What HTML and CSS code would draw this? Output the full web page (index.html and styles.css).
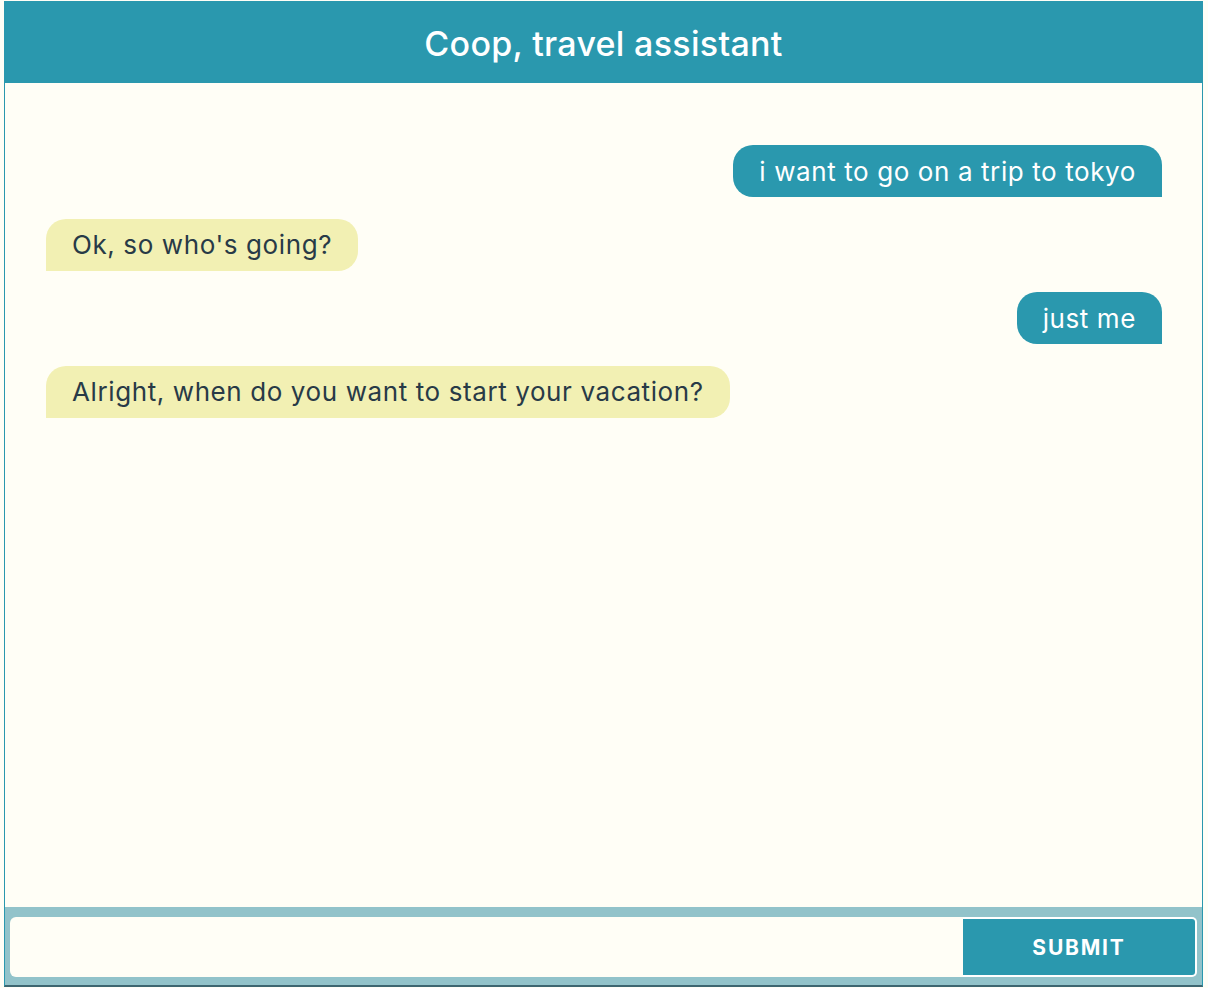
FILE: index.html
```html
<!DOCTYPE html>
<html>
<head>
<meta charset="utf-8">
<link rel="stylesheet" href="styles.css">
</head>
<body>
<div class="chat">
  <header class="chat-header">Coop, travel assistant</header>
  <main class="messages">
    <div class="msg user"><span>i want to go on a trip to tokyo</span></div>
    <div class="msg bot"><span>Ok, so who's going?</span></div>
    <div class="msg user"><span>just me</span></div>
    <div class="msg bot"><span>Alright, when do you want to start your vacation?</span></div>
  </main>
  <form class="composer" onsubmit="return false">
    <input class="composer-input" type="text">
    <button class="composer-btn" type="submit">SUBMIT</button>
  </form>
</div>
</body>
</html>
```
FILE: styles.css
```css
html, body {
  margin: 0;
  padding: 0;
  background: #fffef6;
}
body {
  font-family: Inter, "Noto Sans", sans-serif;
  padding: 1px 4px 0 4px;
}
.chat {
  width: 1199px;
  height: 986px;
  box-sizing: border-box;
  border: 1px solid #2a98ae;
  border-top: 0;
  border-bottom: 2px solid #3d6670;
  display: flex;
  flex-direction: column;
  background: #fffef6;
}
.chat-header {
  height: 82px;
  flex: none;
  background: #2a98ae;
  color: #fff;
  font-size: 34px;
  font-weight: 500;
  display: flex;
  align-items: center;
  justify-content: center;
  letter-spacing: 0.3px;
  padding-top: 2px;
  box-sizing: border-box;
}
.messages {
  flex: 1;
  padding: 62px 40px 0 41px;
  display: flex;
  flex-direction: column;
  gap: 21.5px;
}
.msg {
  display: flex;
}
.msg span {
  height: 52px;
  box-sizing: border-box;
  display: flex;
  align-items: center;
  padding: 0 26px;
  font-size: 26px;
  letter-spacing: 0.6px;
}
.msg.user {
  justify-content: flex-end;
}
.msg.user span {
  background: #2a98ae;
  color: #fff;
  border-radius: 20px 20px 0 20px;
}
.msg.bot span {
  background: #f2f0b3;
  color: #283a47;
  border-radius: 20px 20px 20px 0;
}
.composer {
  flex: none;
  height: 78px;
  box-sizing: border-box;
  background: #92c3ca;
  padding: 10px 5px 8px 5px;
  display: flex;
  margin: 0;
}
.composer-input {
  flex: 1;
  border: 0;
  border-radius: 6px 0 0 6px;
  background: #fffef6;
  margin: 0;
  outline: none;
}
.composer-btn {
  width: 234px;
  border: 2px solid #fff;
  border-left: 0;
  border-radius: 0 5px 5px 0;
  background: #2a98ae;
  color: #fff;
  font-family: Inter, "Noto Sans", sans-serif;
  font-weight: 700;
  font-size: 21px;
  letter-spacing: 1.8px;
  margin: 0;
}
```
